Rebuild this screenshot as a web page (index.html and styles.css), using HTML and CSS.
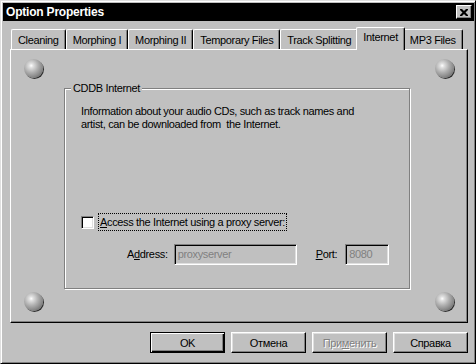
FILE: index.html
```html
<!DOCTYPE html>
<html lang="en">
<head>
    <meta charset="UTF-8">
    <title>Option Properties</title>
    <link rel="stylesheet" href="styles.css">
</head>
<body>

    <div class="window">
        <div class="titlebar">
            <span class="title">Option Properties</span>
            <span class="close">
                <svg width="8" height="7" viewBox="0 0 8 7">
                    <path d="M0 0h2l2 2 2-2h2v1l-2.5 2.5L8 6v1H6L4 5 2 7H0V6l2.5-2.5L0 1z" fill="#000"/>
                </svg>
            </span>
        </div>

        <div class="tabs">
            <div class="tab">Cleaning</div>
            <div class="tab">Morphing I</div>
            <div class="tab">Morphing II</div>
            <div class="tab">Temporary Files</div>
            <div class="tab">Track Splitting</div>
            <div class="tab active">Internet</div>
            <div class="tab">MP3 Files</div>
        </div>

        <div class="panel">
            <div class="side">
                <span class="ball"></span>
                <span class="ball"></span>
            </div>

            <div class="group">
                <div class="legend">CDDB Internet</div>
                <p class="info">Information about your audio CDs, such as track names and<br>artist, can be downloaded from&nbsp; the Internet.</p>

                <div class="check-row">
                    <span class="checkbox"></span>
                    <span class="focus"><u>A</u>ccess the Internet using a proxy server:</span>
                </div>

                <div class="field-row">
                    <span class="field-label">A<u>d</u>dress:</span>
                    <span class="input address">proxyserver</span>
                    <span class="field-label port-label"><u>P</u>ort:</span>
                    <span class="input port">8080</span>
                </div>
            </div>

            <div class="side right">
                <span class="ball"></span>
                <span class="ball"></span>
            </div>
        </div>

        <div class="buttons">
            <button class="btn default">OK</button>
            <button class="btn">Отмена</button>
            <button class="btn disabled">При<u>м</u>енить</button>
            <button class="btn">Справка</button>
        </div>
    </div>

</body>
</html>
```

FILE: styles.css
```css
body {
    margin: 0;
    background-color: #c0c0c0;
    font-family: 'Liberation Sans', Arial, sans-serif;
    font-size: 11px;
    line-height: 13px;
    letter-spacing: -0.35px;
    color: #000;
}

.window {
    width: 476px;
    height: 364px;
    box-sizing: border-box;
    padding: 1px;
    background-color: #c0c0c0;
    border-top: 1px solid #dfdfdf;
    border-left: 1px solid #dfdfdf;
    border-right: 1px solid #000;
    border-bottom: 1px solid #000;
    box-shadow: inset 1px 1px 0 #fff, inset -1px -1px 0 #808080;
}

/* title bar */
.titlebar {
    height: 18px;
    margin: 1px 0 0 1px;
    background-color: #000;
    display: flex;
    align-items: center;
    justify-content: space-between;
    padding: 0 2px 0 3px;
}

.title {
    color: #fff;
    font-weight: bold;
    font-size: 12px;
    letter-spacing: -0.2px;
}

.close {
    width: 16px;
    height: 14px;
    box-sizing: border-box;
    background-color: #c0c0c0;
    border-top: 1px solid #fff;
    border-left: 1px solid #fff;
    border-right: 1px solid #000;
    border-bottom: 1px solid #000;
    box-shadow: inset -1px -1px 0 #808080;
    display: flex;
    align-items: center;
    justify-content: center;
}

/* tabs */
.tabs {
    display: flex;
    align-items: flex-end;
    height: 22px;
    margin: 6px 0 0 8px;
    padding-left: 1px;
}

.tab {
    height: 20px;
    box-sizing: border-box;
    padding: 4px 6px 0 6px;
    border-top: 1px solid #fff;
    border-left: 1px solid #fff;
    border-right: 1px solid #000;
    border-radius: 2px 2px 0 0;
    box-shadow: inset -1px 0 0 #808080;
    white-space: nowrap;
}

.tab.active {
    height: 23px;
    padding-top: 3px;
    margin: 0 -2px -1px;
    position: relative;
    background-color: #c0c0c0;
    z-index: 1;
}

/* page */
.panel {
    height: 274px;
    box-sizing: border-box;
    margin: 0 6px 0 8px;
    padding: 9px 10px 11px 13px;
    display: flex;
    border-top: 1px solid #fff;
    border-left: 1px solid #fff;
    border-right: 1px solid #000;
    border-bottom: 1px solid #000;
    box-shadow: inset -1px -1px 0 #808080;
}

.side {
    width: 20px;
    display: flex;
    flex-direction: column;
    justify-content: space-between;
}

.side.right {
    margin-left: 25px;
}

.ball {
    width: 19px;
    height: 19px;
    border-radius: 50%;
    background: radial-gradient(circle at 38% 35%, #fff 0, #e0e0e0 12%, #b0b0b0 40%, #8a8a8a 65%, #5a5a5a 90%);
    box-shadow: 1px 1px 0 #303030;
}

.group {
    width: 346px;
    height: 201px;
    box-sizing: border-box;
    margin: 29px 0 0 20px;
    padding: 0 15px;
    border: 1px solid #808080;
    box-shadow: 1px 1px 0 #fff, inset 1px 1px 0 #fff;
}

.legend {
    width: fit-content;
    margin: -7px 0 0 -9px;
    padding: 0 2px;
    background-color: #c0c0c0;
}

.info {
    margin: 10px 0 0 1px;
}

.check-row {
    display: flex;
    align-items: center;
    margin-top: 82px;
    padding-left: 1px;
}

.checkbox {
    width: 13px;
    height: 13px;
    box-sizing: border-box;
    background-color: #fff;
    border-top: 1px solid #808080;
    border-left: 1px solid #808080;
    border-right: 1px solid #fff;
    border-bottom: 1px solid #fff;
    box-shadow: inset 1px 1px 0 #000, inset -1px -1px 0 #dfdfdf;
}

.focus {
    margin-left: 4px;
    padding: 2px 1px 1px 1px;
    border: 1px dotted #000;
}

.field-row {
    display: flex;
    align-items: center;
    margin-top: 13px;
    padding-left: 47px;
}

.input {
    height: 21px;
    box-sizing: border-box;
    padding: 3px 3px 0;
    color: #808080;
    border-top: 1px solid #808080;
    border-left: 1px solid #808080;
    border-right: 1px solid #fff;
    border-bottom: 1px solid #fff;
    box-shadow: inset 1px 1px 0 #000, inset -1px -1px 0 #dfdfdf;
}

.address {
    width: 123px;
    margin-left: 6px;
}

.port-label {
    margin-left: 19px;
}

.port {
    width: 44px;
    margin-left: 8px;
}

/* dialog buttons */
.buttons {
    display: flex;
    justify-content: flex-end;
    gap: 6px;
    margin: 9px 6px 0 0;
}

.btn {
    width: 75px;
    height: 21px;
    padding: 0;
    font-family: inherit;
    font-size: 11px;
    letter-spacing: inherit;
    color: #000;
    background-color: #c0c0c0;
    border-top: 1px solid #fff;
    border-left: 1px solid #fff;
    border-right: 1px solid #000;
    border-bottom: 1px solid #000;
    box-shadow: inset -1px -1px 0 #808080, inset 1px 1px 0 #dfdfdf;
}

.btn.default {
    border: 1px solid #000;
    box-shadow: inset 1px 1px 0 #fff, inset -1px -1px 0 #000, inset -2px -2px 0 #808080;
}

.btn.disabled {
    color: #808080;
    text-shadow: 1px 1px 0 #fff;
}
```
